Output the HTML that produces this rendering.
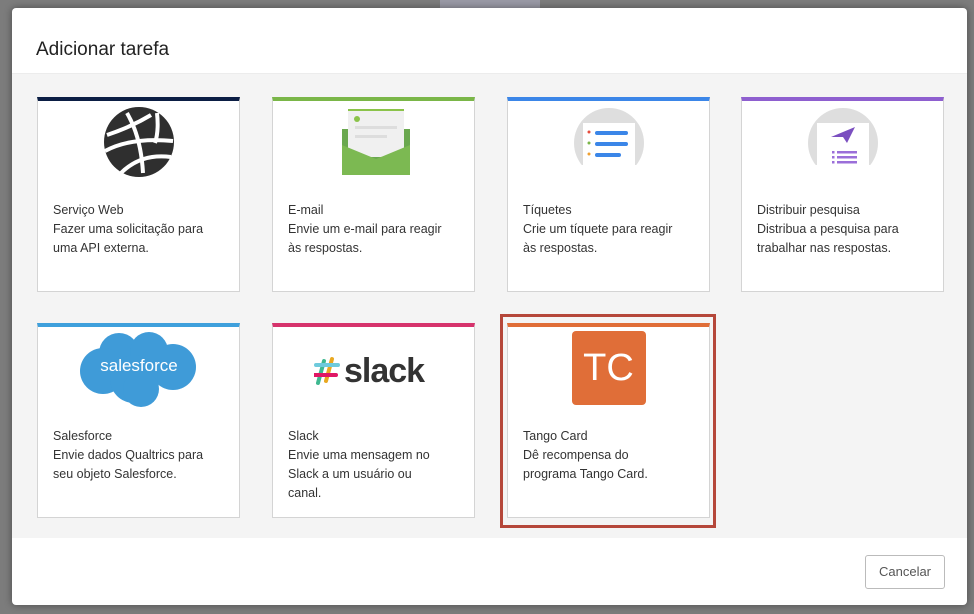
<!DOCTYPE html>
<html><head><meta charset="utf-8"><style>
*{box-sizing:border-box;margin:0;padding:0}
body{width:974px;height:614px;background:#7c7c7c;font-family:"Liberation Sans",sans-serif;position:relative;overflow:hidden}
.topbar{position:absolute;left:440px;top:0;width:100px;height:10px;background:#9a9aa6;color:#333;font-size:11px}
.modal{position:absolute;left:12px;top:8px;width:955px;height:597px;background:#fff;border-radius:4px;overflow:hidden;box-shadow:0 0 8px rgba(0,0,0,.4)}
.hdr{height:65px;position:relative}
.hdr h1{position:absolute;left:24px;top:31px;font-size:19px;font-weight:normal;color:#222}
.body{position:absolute;top:65px;left:0;right:0;height:465px;background:#f4f4f4;border-top:1px solid #ececec}
.card{position:absolute;width:203px;height:195px;background:#fff;border:1px solid #d4d4d4;border-top:4px solid}
.card .t{position:absolute;left:15px;top:100px;font-size:12.5px;line-height:19px;color:#333}
.ic{position:absolute;left:0;right:0;top:6px;height:70px;display:flex;justify-content:center;align-items:flex-start}
.sel{position:absolute;left:488px;top:240px;width:216px;height:214px;border:3px solid #b5473a}
.btn{position:absolute;left:853px;top:547px;width:80px;height:34px;border:1px solid #bbb;border-radius:3px;background:#fff;color:#555;font-size:13px;text-align:center;line-height:32px}
</style></head><body>
<div class="topbar"></div>
<div class="modal">
<div class="hdr"><h1>Adicionar tarefa</h1></div>
<div class="body">
<div class="card" style="left:25px;top:23px;border-top-color:#0b1e44">
<div class="ic"><svg width="76" height="70" viewBox="0 0 76 70"><circle cx="38" cy="35" r="35" fill="#2f2f2f"/><g stroke="#fff" stroke-width="4" fill="none"><path d="M6 28 Q30 20 50 8"/><path d="M4 44 Q30 30 72 34"/><path d="M20 66 Q40 46 70 50"/><path d="M26 6 Q40 30 42 66"/><path d="M56 6 Q58 24 54 36"/></g></svg></div>
<div class="t">Serviço Web<br>Fazer uma solicitação para<br>uma API externa.</div></div>
<div class="card" style="left:260px;top:23px;border-top-color:#7ab648">
<div class="ic"><svg width="72" height="70" viewBox="0 0 72 70"><rect x="4" y="22" width="68" height="46" fill="#6aa84f"/><rect x="10" y="2" width="56" height="48" fill="#f0f0f0"/><rect x="10" y="2" width="56" height="2" fill="#8bc34a"/><circle cx="19" cy="12" r="3" fill="#8bc34a"/><rect x="17" y="19" width="42" height="3" fill="#ddd"/><rect x="17" y="28" width="32" height="3" fill="#ddd"/><path d="M4 68 L4 38 L38 52 L72 38 L72 68 Z" fill="#7cb952"/></svg></div>
<div class="t">E-mail<br>Envie um e-mail para reagir<br>às respostas.</div></div>
<div class="card" style="left:495px;top:23px;border-top-color:#3b86e8">
<div class="ic"><svg width="72" height="58" viewBox="0 0 72 58"><circle cx="36" cy="36" r="35" fill="#dedede"/><rect x="10" y="16" width="52" height="42" fill="#fff"/><rect x="22" y="24" width="33" height="4" rx="2" fill="#3b86e8"/><rect x="22" y="35" width="33" height="4" rx="2" fill="#3b86e8"/><rect x="22" y="46" width="26" height="4" rx="2" fill="#3b86e8"/><circle cx="16" cy="25" r="1.5" fill="#e74c3c"/><circle cx="16" cy="36" r="1.5" fill="#7ab648"/><circle cx="16" cy="47" r="1.5" fill="#f0a030"/></svg></div>
<div class="t">Tíquetes<br>Crie um tíquete para reagir<br>às respostas.</div></div>
<div class="card" style="left:729px;top:23px;border-top-color:#8e5fcf">
<div class="ic"><svg width="72" height="58" viewBox="0 0 72 58"><circle cx="36" cy="36" r="35" fill="#dedede"/><rect x="10" y="16" width="52" height="42" fill="#fff"/><path d="M24 30 L48 20 L40 36 L36 30 Z" fill="#7b4fc0"/><g fill="#9b6fd9"><rect x="30" y="44" width="20" height="2.5"/><rect x="30" y="49" width="20" height="2.5"/><rect x="30" y="54" width="20" height="2.5"/><rect x="25" y="44" width="2.5" height="2.5"/><rect x="25" y="49" width="2.5" height="2.5"/><rect x="25" y="54" width="2.5" height="2.5"/></g></svg></div>
<div class="t">Distribuir pesquisa<br>Distribua a pesquisa para<br>trabalhar nas respostas.</div></div>
<div class="card" style="left:25px;top:249px;border-top-color:#3fa0dc">
<div class="ic" style="top:2px;height:80px"><svg width="120" height="80" viewBox="0 0 120 80"><g fill="#3f9bd8"><circle cx="40" cy="24" r="20"/><circle cx="70" cy="22" r="19"/><circle cx="94" cy="38" r="23"/><circle cx="24" cy="42" r="23"/><circle cx="55" cy="50" r="24"/><circle cx="62" cy="60" r="18"/></g><text x="60" y="42" text-anchor="middle" fill="#fff" font-size="17" font-family="Liberation Sans, sans-serif">salesforce</text></svg></div>
<div class="t">Salesforce<br>Envie dados Qualtrics para<br>seu objeto Salesforce.</div></div>
<div class="card" style="left:260px;top:249px;border-top-color:#d6336c">
<div class="ic" style="top:20px"><svg width="120" height="50" viewBox="0 0 120 50"><g stroke-width="4" stroke-linecap="round"><path d="M10 14 L4 36" stroke="#3eb890"/><path d="M18 12 L12 34" stroke="#e9a820"/><path d="M2 18 L24 18" stroke="#6ecadc"/><path d="M0 28 L22 28" stroke="#e01765"/></g><text x="30" y="35" fill="#333" font-size="34" font-weight="bold" font-family="Liberation Sans, sans-serif" letter-spacing="-1">slack</text></svg></div>
<div class="t">Slack<br>Envie uma mensagem no<br>Slack a um usuário ou<br>canal.</div></div>
<div class="card" style="left:495px;top:249px;border-top-color:#e06e38">
<div class="ic" style="top:4px"><div style="width:74px;height:74px;background:#e06e38;border-radius:4px;color:#fff;font-size:38px;text-align:center;line-height:74px">TC</div></div>
<div class="t">Tango Card<br>Dê recompensa do<br>programa Tango Card.</div></div>
<div class="sel"></div>
</div>
<div class="btn">Cancelar</div>
</div>
</body></html>
